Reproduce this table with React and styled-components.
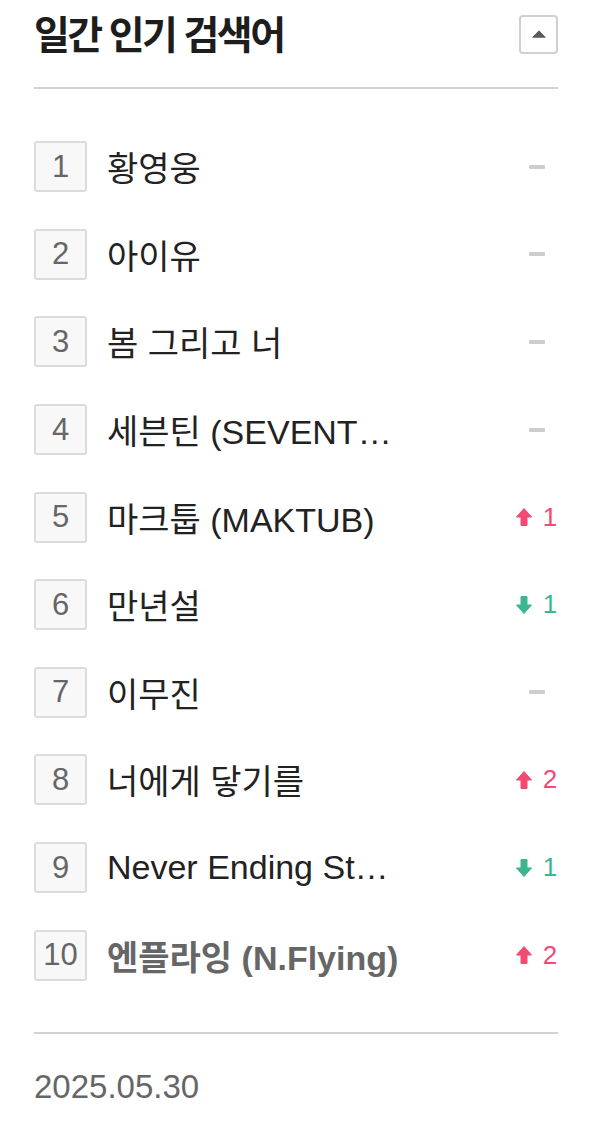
import styled, { createGlobalStyle } from 'styled-components';

const GlobalStyle = createGlobalStyle`
  body {
    margin: 0;
    background: #fff;
    font-family: "Liberation Sans", "Noto Sans CJK KR", sans-serif;
  }
`;

const Panel = styled.section`
  width: 524px;
  padding: 0 37px 0 34px;
`;

const Header = styled.div`
  height: 89px;
  display: flex;
  align-items: flex-start;
  justify-content: space-between;
  border-bottom: 2px solid #d2d2d2;
  box-sizing: border-box;
`;

const Title = styled.h1`
  margin: 11px 0 0;
  font-size: 39px;
  font-weight: 700;
  letter-spacing: -2.6px;
  color: #1d1d1d;
  line-height: 50px;
`;

const Toggle = styled.button`
  margin-top: 15px;
  width: 39px;
  height: 39px;
  border: 2px solid #d0d0d0;
  border-radius: 4px;
  background: #fff;
  display: flex;
  align-items: center;
  justify-content: center;
  padding: 0 0 2px;
`;

const List = styled.ol`
  list-style: none;
  margin: 0;
  padding: 34px 0 33px;
  border-bottom: 2px solid #d2d2d2;
`;

const Row = styled.li`
  height: 87.6px;
  display: flex;
  align-items: center;
`;

const Rank = styled.span`
  width: 53px;
  height: 51px;
  box-sizing: border-box;
  border: 2px solid #dcdcdc;
  border-radius: 3px;
  background: #f8f8f8;
  display: flex;
  align-items: center;
  justify-content: center;
  font-size: 31px;
  color: #666;
  flex-shrink: 0;
`;

const Keyword = styled.span`
  margin-left: 20px;
  width: 292px;
  font-size: 34px;
  color: ${p => (p.$bold ? '#666' : '#222')};
  font-weight: ${p => (p.$bold ? 700 : 400)};
  white-space: nowrap;
  overflow: hidden;
  text-overflow: ellipsis;
`;

const Change = styled.span`
  margin-left: auto;
  width: 43px;
  display: flex;
  align-items: center;
  justify-content: center;
  gap: 11px;
  font-size: 26px;
  color: ${p => (p.$dir === 'up' ? '#f24b73' : '#3db592')};
`;

const Dash = styled.span`
  width: 16px;
  height: 4px;
  background: #cdcdcd;
  border-radius: 1px;
`;

const Footer = styled.div`
  padding-top: 34px;
  font-size: 33px;
  color: #666;
`;

const Arrow = ({ dir }) => (
  <svg width="16" height="18" viewBox="0 0 16 18">
    <path
      d="M8 0.5 L15.5 9 L11 9 L11 17.5 L5 17.5 L5 9 L0.5 9 Z"
      fill="currentColor"
      stroke="currentColor"
      strokeWidth="1"
      strokeLinejoin="round"
      transform={dir === 'down' ? 'rotate(180 8 9)' : undefined}
    />
  </svg>
);

const items = [
  { name: '황영웅' },
  { name: '아이유' },
  { name: '봄 그리고 너' },
  { name: '세븐틴 (SEVENTEEN)' },
  { name: '마크툽 (MAKTUB)', dir: 'up', n: 1 },
  { name: '만년설', dir: 'down', n: 1 },
  { name: '이무진' },
  { name: '너에게 닿기를', dir: 'up', n: 2 },
  { name: 'Never Ending Story', dir: 'down', n: 1 },
  { name: '엔플라잉 (N.Flying)', dir: 'up', n: 2, bold: true },
];

export default function App() {
  return (
    <Panel>
      <GlobalStyle />
      <Header>
        <Title>일간 인기 검색어</Title>
        <Toggle aria-label="접기">
          <svg width="14" height="8" viewBox="0 0 14 8">
            <path
              d="M7 0.8 L13.2 7.2 L0.8 7.2 Z"
              fill="#5a5a5a"
              stroke="#5a5a5a"
              strokeWidth="1"
              strokeLinejoin="round"
            />
          </svg>
        </Toggle>
      </Header>
      <List>
        {items.map((it, i) => (
          <Row key={i}>
            <Rank>{i + 1}</Rank>
            <Keyword $bold={it.bold} title={it.name}>{it.name}</Keyword>
            {it.dir ? (
              <Change $dir={it.dir}>
                <Arrow dir={it.dir} />
                {it.n}
              </Change>
            ) : (
              <Change>
                <Dash />
              </Change>
            )}
          </Row>
        ))}
      </List>
      <Footer>2025.05.30</Footer>
    </Panel>
  );
}
